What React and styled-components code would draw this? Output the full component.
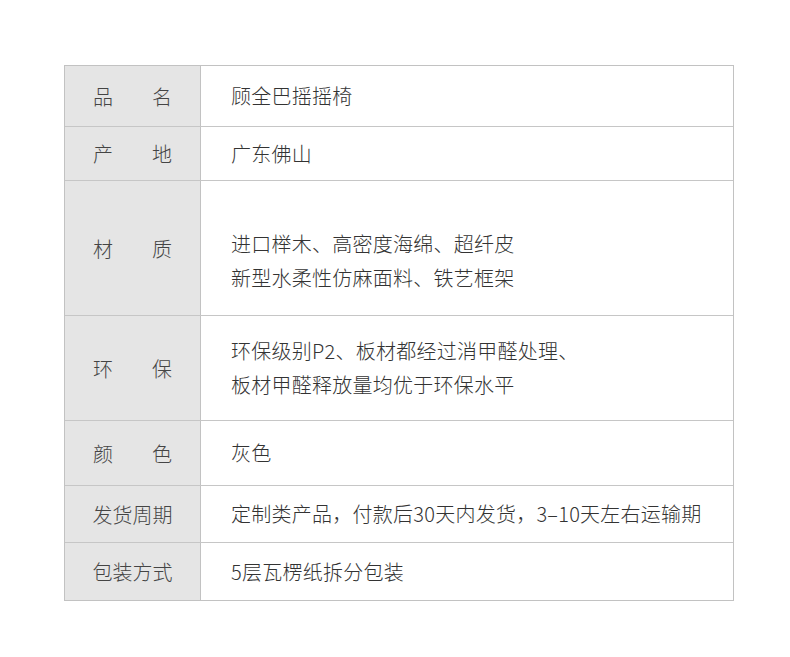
import React from 'react'
import styled, { createGlobalStyle } from 'styled-components'

const GlobalStyle = createGlobalStyle`
  body {
    margin: 0;
    background: #ffffff;
    font-family: "Noto Sans CJK SC", "Noto Sans", sans-serif;
  }
`

const Page = styled.div`
  width: 790px;
  height: 657px;
  padding: 65px 0 0 64px;
  box-sizing: border-box;
`

const Table = styled.div`
  width: 670px;
  border: 1px solid #c2c2c2;
  box-sizing: border-box;
`

const Row = styled.div`
  display: flex;
  height: ${p => p.h}px;
  border-top: ${p => (p.first ? 'none' : '1px solid #c6c6c6')};
  box-sizing: border-box;
`

const Label = styled.div`
  width: 136px;
  flex-shrink: 0;
  background: #e5e5e5;
  border-right: 1px solid #c2c2c2;
  display: flex;
  align-items: center;
  justify-content: ${p => (p.spread ? 'space-between' : 'center')};
  padding: ${p => (p.spread ? '0 28px' : '0')};
  box-sizing: border-box;
  font-size: 20px;
  font-weight: 300;
  white-space: nowrap;
  color: #444;
`

const Value = styled.div`
  flex: 1;
  display: flex;
  flex-direction: column;
  justify-content: center;
  padding-left: 30px;
  padding-top: ${p => p.pt || 0}px;
  font-size: 20px;
  font-weight: 300;
  line-height: 34px;
  color: #333;
  letter-spacing: 0.25px;
  white-space: nowrap;
`

const rows = [
  { label: ['品', '名'], value: ['顾全巴摇摇椅'], h: 60 },
  { label: ['产', '地'], value: ['广东佛山'], h: 54 },
  { label: ['材', '质'], value: ['进口榉木、高密度海绵、超纤皮', '新型水柔性仿麻面料、铁艺框架'], h: 135, pt: 26 },
  { label: ['环', '保'], value: ['环保级别P2、板材都经过消甲醛处理、', '板材甲醛释放量均优于环保水平'], h: 105 },
  { label: ['颜', '色'], value: ['灰色'], h: 65 },
  { label: '发货周期', value: ['定制类产品，付款后30天内发货，3–10天左右运输期'], h: 57 },
  { label: '包装方式', value: ['5层瓦楞纸拆分包装'], h: 58 },
]

const App = () => {
  return (
    <Page>
      <GlobalStyle />
      <Table>
        {rows.map((r, i) => (
          <Row key={i} h={r.h} first={i === 0}>
            {Array.isArray(r.label) ? (
              <Label spread>
                <span>{r.label[0]}</span>
                <span>{r.label[1]}</span>
              </Label>
            ) : (
              <Label>{r.label}</Label>
            )}
            <Value pt={r.pt}>
              {r.value.map((line, j) => (
                <div key={j}>{line}</div>
              ))}
            </Value>
          </Row>
        ))}
      </Table>
    </Page>
  )
}

export default App
